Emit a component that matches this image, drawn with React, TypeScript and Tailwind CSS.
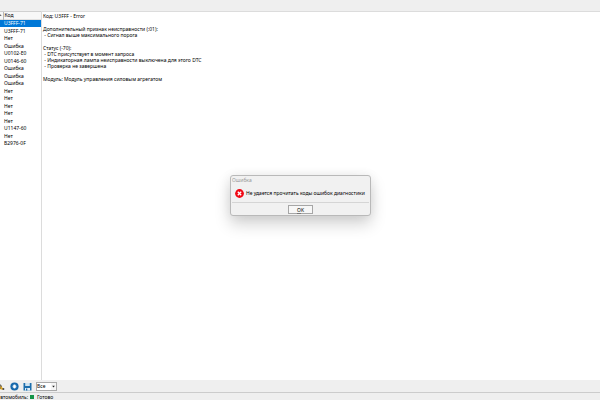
const codes = [
  "U3FFF-71",
  "U3FFF-71",
  "Нет",
  "Ошибка",
  "U0102-E0",
  "U0146-60",
  "Ошибка",
  "Ошибка",
  "Ошибка",
  "Нет",
  "Нет",
  "Нет",
  "Нет",
  "Нет",
  "U1147-60",
  "Нет",
  "B2976-0F",
];

const details = [
  ["Код: U3FFF - Error"],
  ["Дополнительный признак неисправности (:01):", " - Сигнал выше максимального порога"],
  [
    "Статус (-70):",
    " - DTC присутствует в момент запроса",
    " - Индикаторная лампа неисправности выключена для этого DTC",
    " - Проверка не завершена",
  ],
  ["Модуль: Модуль управления силовым агрегатом"],
];

function CodeTable() {
  return (
    <div className="w-[41px] shrink-0 border-t border-[#d0d0d0] bg-white">
      <table className="h-[135px] w-full border-collapse">
        <thead>
          <tr className="h-[7px] border-b border-[#e0e0e0] bg-[#f7f7f7]">
            <th className="w-[3px] border-r border-[#b8b8b8] p-0">
              <svg viewBox="0 0 3 4" className="h-1 w-[2px]" aria-hidden="true">
                <path d="M0 0.5 L2.5 3.5 H0 Z" fill="#666" />
              </svg>
            </th>
            <th className="p-0 pl-px text-left font-normal">Код</th>
          </tr>
        </thead>
        <tbody>
          {codes.map((code, i) => (
            <tr key={i} className={i === 0 ? "bg-[#0078d7] text-white" : ""}>
              <td className="p-0" />
              <td className="p-0 pl-px">{code}</td>
            </tr>
          ))}
        </tbody>
      </table>
    </div>
  );
}

function Toolbar() {
  return (
    <div className="flex h-3 items-center">
      <button aria-label="Очистить" className="h-[10px] w-2">
        <svg viewBox="0 0 8 10" className="h-full w-full">
          <path d="M0 3 L2 5 V8 H0 Z" fill="#666" />
          <path d="M0.5 4.5 L4 8.5 H0.5 Z" fill="#e6a91c" />
          <path d="M2.5 7 H4.2 V9 H2.5 Z" fill="#555" />
        </svg>
      </button>
      <button aria-label="Обновить" className="ml-[2px] h-[9px] w-[9px]">
        <svg viewBox="0 0 9 9" className="h-full w-full">
          <circle cx="4.5" cy="4.5" r="4.1" fill="#1769ad" />
          <circle cx="4.5" cy="4.5" r="2" fill="#a9cbe5" />
          <path d="M3.7 2.8 H5.3 V4.5 H6.2 L4.5 6.4 L2.8 4.5 H3.7 Z" fill="#fff" />
        </svg>
      </button>
      <button aria-label="Сохранить" className="ml-1 h-[9px] w-[9px]">
        <svg viewBox="0 0 9 9" className="h-full w-full">
          <path d="M0.5 1 H8.5 V8.5 H0.5 Z" fill="#1c6ead" />
          <path d="M2.2 1 H6.8 V4 H2.2 Z" fill="#cfe3f1" />
          <path d="M2 6 H7 V8.5 H2 Z" fill="#e4eef6" />
          <path d="M3 6.5 H4.3 V8.5 H3 Z" fill="#1c6ead" />
        </svg>
      </button>
      <div className="relative ml-1 h-[9px] w-[21px]">
        <select
          aria-label="Фильтр"
          className="block h-full w-full appearance-none border border-[#a9a9a9] bg-white p-0 leading-[7px]"
        >
          <option>Все</option>
        </select>
        <svg
          viewBox="0 0 5 7"
          className="pointer-events-none absolute top-px right-px h-[7px] w-[5px] bg-[#f5f5f5]"
          aria-hidden="true"
        >
          <path d="M1.2 2.8 H3.8 L2.5 4.6 Z" fill="#222" />
        </svg>
      </div>
    </div>
  );
}

function StatusBar() {
  return (
    <footer className="flex h-2 items-center border-t border-[#cccccc]">
      <span className="w-[28px] shrink-0 text-right whitespace-nowrap">втомобиль:</span>
      <span className="ml-[2px] h-1 w-1 bg-[#159447]" />
      <span className="ml-[3px]">Готово</span>
    </footer>
  );
}

function ErrorDialog() {
  return (
    <div className="absolute inset-0 flex items-center justify-center pb-[9px] pl-px">
      <div
        role="alertdialog"
        aria-labelledby="error-title"
        aria-describedby="error-text"
        className="h-[41px] w-[141px] rounded-[3px] border border-[#b9b9b9] bg-[#f1f1f1] shadow-[0_8px_16px_rgba(0,0,0,0.18),0_0_12px_rgba(0,0,0,0.06)]"
      >
        <h1 id="error-title" className="h-2 px-px pt-px text-[#999999]">
          Ошибка
        </h1>
        <div className="mx-px flex h-[19px] items-center border-b border-[#d5d5d5] pl-[3px]">
          <svg viewBox="0 0 9 9" className="h-[9px] w-[9px] shrink-0" aria-hidden="true">
            <circle cx="4.5" cy="4.5" r="4.4" fill="#f00814" />
            <path d="M2.8 2.8 L6.2 6.2 M6.2 2.8 L2.8 6.2" stroke="#fff" strokeWidth="1.3" />
          </svg>
          <p id="error-text" className="ml-[2px] whitespace-nowrap">
            Не удается прочитать коды ошибок диагностики
          </p>
        </div>
        <button className="mx-auto mt-[2px] block h-[9px] w-[25px] border border-[#a6a6a6] bg-[#f7f7f7]">
          <span className="underline decoration-[#777777]">O</span>K
        </button>
      </div>
    </div>
  );
}

export default function App() {
  return (
    <div className="relative flex h-screen flex-col overflow-hidden bg-[#efefef] font-['Noto_Sans','Open_Sans',sans-serif] text-[5px] leading-[6px] text-black">
      <header className="h-[11px] shrink-0" />
      <main className="flex min-h-0 flex-1">
        <CodeTable />
        <section className="flex flex-1 flex-col gap-[7px] border-t border-l border-[#dcdcdc] bg-white pt-px pl-px">
          {details.map((lines, i) => (
            <div key={i}>
              {lines.map((line) => (
                <p key={line} className="whitespace-pre">
                  {line}
                </p>
              ))}
            </div>
          ))}
        </section>
      </main>
      <Toolbar />
      <StatusBar />
      <ErrorDialog />
    </div>
  );
}
